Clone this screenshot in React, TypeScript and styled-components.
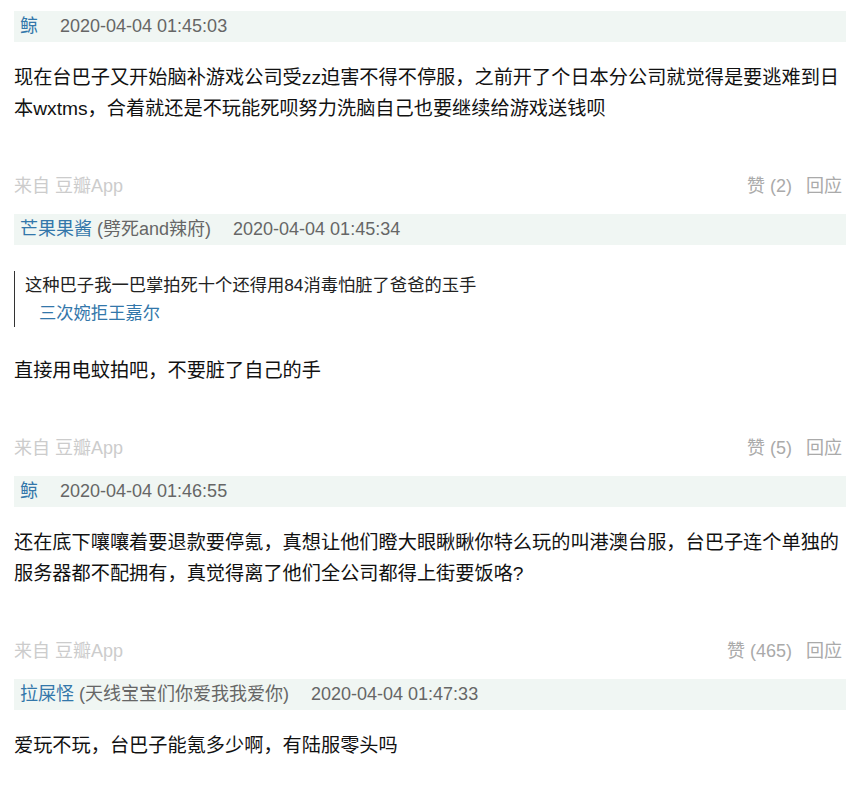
import styled, { createGlobalStyle } from "styled-components";

const GlobalStyle = createGlobalStyle`
  body {
    margin: 0;
    background: #fff;
    font-family: "Liberation Sans", Arial, "Noto Sans CJK SC", sans-serif;
  }
`;

interface Quote {
  text: string;
  author: string;
}

interface Reply {
  name: string;
  nick?: string;
  time: string;
  quote?: Quote;
  text: string;
  likes: number;
}

const replies: Reply[] = [
  {
    name: "鲸",
    time: "2020-04-04 01:45:03",
    text: "现在台巴子又开始脑补游戏公司受zz迫害不得不停服，之前开了个日本分公司就觉得是要逃难到日本wxtms，合着就还是不玩能死呗努力洗脑自己也要继续给游戏送钱呗",
    likes: 2,
  },
  {
    name: "芒果果酱",
    nick: "(劈死and辣府)",
    time: "2020-04-04 01:45:34",
    quote: {
      text: "这种巴子我一巴掌拍死十个还得用84消毒怕脏了爸爸的玉手",
      author: "三次婉拒王嘉尔",
    },
    text: "直接用电蚊拍吧，不要脏了自己的手",
    likes: 5,
  },
  {
    name: "鲸",
    time: "2020-04-04 01:46:55",
    text: "还在底下嚷嚷着要退款要停氪，真想让他们瞪大眼瞅瞅你特么玩的叫港澳台服，台巴子连个单独的服务器都不配拥有，真觉得离了他们全公司都得上街要饭咯?",
    likes: 465,
  },
  {
    name: "拉屎怪",
    nick: "(天线宝宝们你爱我我爱你)",
    time: "2020-04-04 01:47:33",
    text: "爱玩不玩，台巴子能氪多少啊，有陆服零头吗",
    likes: 0,
  },
];

const Page = styled.div`
  padding: 11px 0 0 14px;
`;

const Item = styled.div`
  margin-bottom: 14px;
`;

const Head = styled.div`
  display: flex;
  align-items: center;
  height: 31px;
  padding-left: 6px;
  background: #f0f6f3;
  font-size: 18px;
  line-height: 31px;
  color: #666;
`;

const Name = styled.span`
  color: #37a;
`;

const Nick = styled.span`
  margin-left: 5px;
  color: #666;
`;

const Time = styled.span`
  margin-left: 22px;
  color: #666;
`;

const Text = styled.p`
  margin: 20px 0 0;
  font-size: 19.2px;
  line-height: 31px;
  color: #111;
`;

const QuoteBox = styled.div`
  margin: 26px 0 28px;
  padding-left: 10px;
  border-left: 1px solid #333;
  font-size: 17.3px;
  line-height: 28px;
  color: #222;
`;

const QuoteAuthor = styled.div`
  margin-left: 14px;
  color: #37a;
`;

const Foot = styled.div`
  display: flex;
  justify-content: space-between;
  margin-top: 49px;
  padding-right: 4px;
  font-size: 18px;
  line-height: 27px;
`;

const Source = styled.span`
  color: #ccc;
`;

const Actions = styled.span`
  display: flex;
  gap: 14px;
  color: #aaa;
`;

export default function App() {
  return (
    <Page>
      <GlobalStyle />
      {replies.map((r, i) => (
        <Item key={i}>
          <Head>
            <Name>{r.name}</Name>
            {r.nick && <Nick>{r.nick}</Nick>}
            <Time>{r.time}</Time>
          </Head>
          {r.quote && (
            <QuoteBox>
              <div>{r.quote.text}</div>
              <QuoteAuthor>{r.quote.author}</QuoteAuthor>
            </QuoteBox>
          )}
          <Text>{r.text}</Text>
          {i < replies.length - 1 && (
            <Foot>
              <Source>来自 豆瓣App</Source>
              <Actions>
                <span>赞 ({r.likes})</span>
                <span>回应</span>
              </Actions>
            </Foot>
          )}
        </Item>
      ))}
    </Page>
  );
}
